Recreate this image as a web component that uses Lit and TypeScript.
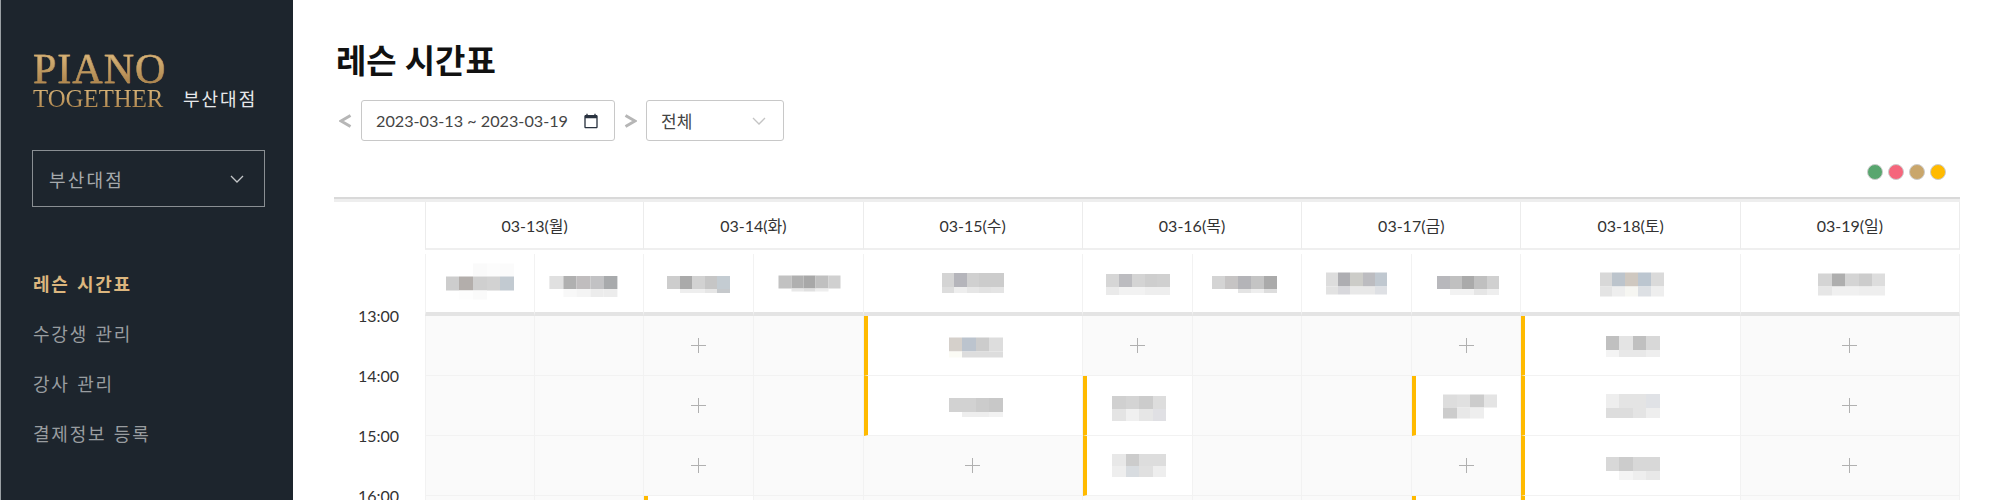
import { LitElement, html, css, svg } from "lit";
import { customElement } from "lit/decorators.js";

interface Mosaic { w: number; rows: string[][]; h: number[]; dx: number; dy: number; }
type Cell =
  | { kind: "empty"; span: number }
  | { kind: "plus"; span: number }
  | { kind: "booked"; span: number; m: Mosaic };

const T = "transparent";
const NAV = ["레슨 시간표", "수강생 관리", "강사 관리", "결제정보 등록"];
const DAYS = ["03-13(월)", "03-14(화)", "03-15(수)", "03-16(목)", "03-17(금)", "03-18(토)", "03-19(일)"];
const LEGEND = ["#58a66e", "#f5667c", "#c9a66b", "#ffba00"];

const NAMES: { span: number; m: Mosaic }[] = [
  { span: 1, m: { w: 13.6, dx: 0, dy: -1.5, h: [13, 14, 9], rows: [[T, T, "#fafafa", "#fcfcfc", "#fbfbfb"], ["#cdcdcd", "#b3aeab", "#cfcfcf", "#d2d2d2", "#c2cad1"], [T, "#fdfdfd", "#fafafa", T, T]] } },
  { span: 1, m: { w: 13.5, dx: -5.6, dy: 3, h: [13, 8], rows: [["#e0e0e0", "#b0b0b0", "#c0bdbe", "#c2c2c4", "#a8aaac"], [T, "#f8f8f8", "#f4f4f4", "#ececec", "#ececec"]] } },
  { span: 1, m: { w: 12.6, dx: 0, dy: 1, h: [13, 4], rows: [["#cdcdcd", "#aaaaaa", "#d2d2d2", "#c6c6c6", "#c4ccd2"], [T, "#eeeeee", "#eeeeee", "#e6e6e6", "#c6c9cc"]] } },
  { span: 1, m: { w: 12.4, dx: 1.5, dy: 0.5, h: [13, 3], rows: [["#c2c2c2", "#b0b0b0", "#a8a8a8", "#c0c0c0", "#d0d0d0"], [T, "#e8e8e8", "#e0e0e0", "#eeeeee", T]] } },
  { span: 2, m: { w: 12.4, dx: 0, dy: 0, h: [14, 6], rows: [["#d4d4d4", "#b5b5bb", "#d0d0d0", "#cccccc", "#cccccc"], ["#dddddd", "#eeeeee", "#e6e6e6", "#e2e2e2", "#e4e4e4"]] } },
  { span: 1, m: { w: 12.8, dx: 1, dy: 1, h: [13, 8], rows: [["#d6d6d6", "#bcbcc0", "#d4d4d4", "#cecece", "#d0d0d0"], ["#eaeaea", "#f2f2f2", "#f2f2f2", "#eeeeee", "#eeeeee"]] } },
  { span: 1, m: { w: 13, dx: -2, dy: 1, h: [13, 4], rows: [["#d4d4d4", "#c6c4c4", "#b4b4b8", "#c4c4c4", "#aaaaaa"], [T, T, "#e4e4e4", "#eeeeee", "#dddddd"]] } },
  { span: 1, m: { w: 12.2, dx: 0, dy: 0.5, h: [14, 8], rows: [["#dddddd", "#aeaeb2", "#ccccc8", "#bcbcc0", "#c0c8d0"], ["#e2e2e2", "#d8d8dc", "#e8e8e8", "#e8e8e8", "#dee0e4"]] } },
  { span: 1, m: { w: 12.4, dx: 2, dy: 2, h: [13, 6], rows: [["#b8b8bc", "#c0c0c0", "#aaaaaa", "#c0c0c0", "#d0d0d0"], [T, "#f2f2f2", "#f2f2f2", "#e6e6e6", "#eeeeee"]] } },
  { span: 2, m: { w: 12.8, dx: 1, dy: 1.5, h: [14, 10], rows: [["#d8d8d8", "#bcc4cc", "#cfc8c0", "#bcc6d0", "#dadada"], ["#e4e4e4", "#eeeeee", "#f6f6f2", "#dde0e4", "#eeeeee"]] } },
  { span: 2, m: { w: 13.4, dx: 2, dy: 1.5, h: [13, 9], rows: [["#d4d4d4", "#aeaeae", "#d4d4d4", "#cccccc", "#dddddd"], ["#e6e6e6", "#f0f0f0", "#f0f0f0", "#eeeeee", "#eeeeee"]] } },
];

const e = (span = 1): Cell => ({ kind: "empty", span });
const p = (span = 1): Cell => ({ kind: "plus", span });
const b = (span: number, dx: number, dy: number, h: number[], rows: string[][]): Cell =>
  ({ kind: "booked", span, m: { w: 13.5, dx, dy, h, rows } });

const ROWS: { time: string; cells: Cell[] }[] = [
  {
    time: "13:00",
    cells: [
      e(), e(), p(), e(),
      b(2, 1, 1.5, [14, 6], [["#d5d0cb", "#bcc4ce", "#cccccc", "#dddddd"], ["#fbfbf5", "#dddddd", "#dddddd", "#dddddd"]]),
      p(), e(), e(), p(),
      b(2, 0, 1, [14, 7], [["#c0c0c0", "#e4e4e4", "#c0c0c0", "#d8d8d8"], ["#f4f4f4", "#e8e8e8", "#e8e8e8", "#eeeeee"]]),
      p(2),
    ],
  },
  {
    time: "14:00",
    cells: [
      e(), e(), p(), e(),
      b(2, 1, 2, [14, 5], [["#d2d2d2", "#d2d2d2", "#cccccc", "#c8c8c8"], [T, "#eeeeee", "#eeeeee", "#f2f2f2"]]),
      b(1, 0, 3, [13, 12], [["#d0d0d0", "#d4d4d4", "#cccccc", "#dddddd"], ["#e4e4e4", "#f0f0f0", "#e6e6e6", "#e0e0e4"]]),
      e(), e(),
      b(1, 2, 0.5, [13, 11], [["#dddddd", "#e0e0e0", "#cccccc", "#e4e4e4"], ["#cccccc", "#e8e8e8", "#eeeeee", T]]),
      b(2, 0, 0, [14, 10], [["#eeeeee", "#e4e4e4", "#e4e4e4", "#e0e2e6"], ["#dddddd", "#dddddd", "#e4e4e4", "#eeeeee"]]),
      p(2),
    ],
  },
  {
    time: "15:00",
    cells: [
      e(), e(), p(), e(), p(2),
      b(1, 0, 0, [12, 11], [["#e8e8e8", "#cccccc", "#dddddd", "#dddddd"], ["#eeeeee", "#d8dce0", "#e0e0e0", "#eeeeee"]]),
      e(), e(), p(),
      b(2, 0, 3, [14, 9], [["#d8d8d8", "#cccccc", "#d8d8d8", "#d8d8d8"], [T, "#f4f4f4", "#eeeeee", "#e8e8e8"]]),
      p(2),
    ],
  },
  {
    time: "16:00",
    cells: [
      e(), e(),
      b(1, 0, 0, [], []),
      e(), e(2), e(), e(), e(),
      b(1, 0, 0, [], []),
      b(2, 0, 0, [], []),
      e(2),
    ],
  },
];

@customElement("app-root")
export class AppRoot extends LitElement {
  static styles = css`
    :host {
      display: block;
      height: 500px;
      overflow: hidden;
      font-family: Lato, "Noto Sans CJK KR", sans-serif;
      color: #333;
      background: #fff;
    }
    .page { display: flex; height: 500px; overflow: hidden; }

    .side {
      width: 293px;
      flex: none;
      box-sizing: border-box;
      background: #1d252d;
      border-left: 1px solid #9aa0a4;
      padding: 53px 0 0 32px;
    }
    .brand { display: flex; align-items: flex-end; }
    .logo { font-family: "Liberation Serif", serif; width: 137px; }
    .logo div {
      background: linear-gradient(180deg, #dcb87c, #a98049);
      -webkit-background-clip: text;
      background-clip: text;
      color: transparent;
      white-space: nowrap;
    }
    .piano {
      font-size: 42px;
      line-height: 32px;
      letter-spacing: 1px;
      margin-bottom: 2px;
      -webkit-text-stroke: 0.4px #c49c60;
    }
    .together { font-size: 24.8px; line-height: 24px; }
    .branch { font-size: 18px; color: #e6e8ea; line-height: 24px; margin-left: 13px; letter-spacing: 2px; }
    .branch-select {
      width: 233px;
      height: 57px;
      box-sizing: border-box;
      margin: 39px 0 0 -1px;
      border: 1px solid #8a8f93;
      display: flex;
      align-items: center;
      justify-content: space-between;
      padding: 0 20px 0 16px;
      color: #a5a9ac;
      font-size: 18px;
      letter-spacing: 2.2px;
    }
    .nav { list-style: none; margin: 52px 0 0; padding: 0; }
    .nav li {
      height: 50px;
      line-height: 50px;
      font-size: 18px;
      color: #999da0;
      letter-spacing: 1.8px;
      word-spacing: 1px;
    }
    .nav li.on { color: #dcb67e; font-weight: 700; }

    .main { flex: none; width: 1626px; margin-left: 41px; }
    h1 {
      margin: 36px 0 0;
      height: 48px;
      line-height: 48px;
      font-size: 33px;
      font-weight: 700;
      color: #111;
      padding-left: 2px;
    }
    .tools { display: flex; align-items: center; margin-top: 16px; height: 41px; }
    .arrow { display: flex; justify-content: center; }
    .arrow.prev { width: 27px; justify-content: flex-start; padding-left: 5px; box-sizing: border-box; }
    .arrow.next { width: 31px; }
    .input {
      height: 41px;
      box-sizing: border-box;
      border: 1px solid #c8c8c8;
      border-radius: 3px;
      display: flex;
      align-items: center;
      justify-content: space-between;
      font-size: 16.2px;
      color: #444;
    }
    .input.date { width: 254px; padding: 0 15px 0 14px; }
    .input.filter { width: 138px; padding: 0 17px 0 14px; font-size: 17px; }
    .legend { display: flex; justify-content: flex-end; gap: 5px; margin-top: 23px; height: 17px; padding-right: 14px; }
    .dot {
      width: 16px;
      height: 16px;
      box-sizing: border-box;
      border-radius: 50%;
      border: 1px solid #ccc;
    }

    .table {
      margin-top: 16px;
      border-top: 2px solid #d9d9d9;
      display: grid;
      grid-template-columns: 91px repeat(14, 1fr);
      grid-template-rows: 3px 48px 66px repeat(4, 60px);
    }
    .table > div { box-sizing: border-box; min-width: 0; }
    .rule-fill { background: #eeeeee; grid-column: 1 / -1; }
    .day {
      grid-column: span 2;
      display: flex;
      align-items: center;
      justify-content: center;
      font-size: 16px;
      color: #333;
      border-right: 1px solid #ececec;
      border-bottom: 2px solid #efefef;
      background: #fff;
    }
    .day.first { border-left: 1px solid #ececec; }
    .blank { background: #fff; }
    .name {
      display: flex;
      align-items: center;
      justify-content: center;
      margin-top: 4px;
      border-right: 1px solid #f2f2f2;
      border-bottom: 4px solid #e4e4e4;
    }
    .name.first { border-left: 1px solid #f2f2f2; }
    .time {
      font-size: 16px;
      text-align: right;
      padding-right: 26px;
      height: 20px;
      line-height: 20px;
      margin-top: -10px;
      color: #333;
    }
    .cell {
      display: flex;
      align-items: center;
      justify-content: center;
      border-right: 1px solid #f2f2f2;
      border-bottom: 1px solid #f2f2f2;
      background: #fafafa;
    }
    .cell.first { border-left: 1px solid #f2f2f2; }
    .cell.booked { background: #fff; border-left: 4px solid #ffba00; }
    .mosaic { display: grid; flex: none; }
    .mosaic i { display: block; }
  `;

  private chevron(color: string, w = 14, h = 8) {
    return svg`<svg width=${w} height=${h} viewBox="0 0 14 8"><polyline points="1,1 7,7 13,1" fill="none" stroke=${color} stroke-width="1.3"/></svg>`;
  }

  private mosaic(m: Mosaic) {
    if (!m.rows.length) return "";
    return html`<div
      class="mosaic"
      style="grid-template-columns:repeat(${m.rows[0].length},${m.w}px);grid-template-rows:${m.h.map((v) => v + "px").join(" ")};transform:translate(${m.dx}px,${m.dy}px)"
    >
      ${m.rows.flat().map((c) => html`<i style="background:${c}"></i>`)}
    </div>`;
  }

  private cell(c: Cell, first: boolean) {
    const span = `grid-column:span ${c.span}`;
    const cls = `cell ${first ? "first" : ""} ${c.kind === "booked" ? "booked" : ""}`;
    return html`<div class=${cls} style=${span}>
      ${c.kind === "plus"
        ? svg`<svg width="15" height="15" viewBox="0 0 15 15"><path d="M0 7.5H15M7.5 0V15" stroke="#b0b0b0" stroke-width="1" fill="none"/></svg>`
        : c.kind === "booked"
          ? this.mosaic(c.m)
          : ""}
    </div>`;
  }

  render() {
    return html`<div class="page">
      <aside class="side">
        <div class="brand">
          <div class="logo">
            <div class="piano">PIANO</div>
            <div class="together">TOGETHER</div>
          </div>
          <div class="branch">부산대점</div>
        </div>
        <div class="branch-select">
          <span>부산대점</span>
          ${this.chevron("#c4c7c9")}
        </div>
        <ul class="nav">
          ${NAV.map((n, i) => html`<li class=${i === 0 ? "on" : ""}>${n}</li>`)}
        </ul>
      </aside>
      <main class="main">
        <h1>레슨 시간표</h1>
        <div class="tools">
          <div class="arrow prev">
            <svg width="13" height="14" viewBox="0 0 13 14"><polyline points="11.5,1.5 2,7 11.5,12.5" fill="none" stroke="#b6b6b6" stroke-width="3"/></svg>
          </div>
          <div class="input date">
            <span>2023-03-13 ~ 2023-03-19</span>
            <svg width="16" height="16" viewBox="0 0 24 24"><path fill="#2a3340" d="M20 3h-1V1h-2v2H7V1H5v2H4c-1.1 0-2 .9-2 2v16c0 1.1.9 2 2 2h16c1.1 0 2-.9 2-2V5c0-1.1-.9-2-2-2zm0 18H4V8h16v13z"/></svg>
          </div>
          <div class="arrow next">
            <svg width="13" height="14" viewBox="0 0 13 14"><polyline points="1.5,1.5 11,7 1.5,12.5" fill="none" stroke="#b6b6b6" stroke-width="3"/></svg>
          </div>
          <div class="input filter">
            <span>전체</span>
            ${this.chevron("#c4c4c4", 14, 8)}
          </div>
        </div>
        <div class="legend">
          ${LEGEND.map((c) => html`<div class="dot" style="background:${c}"></div>`)}
        </div>
        <div class="table">
          <div class="rule-fill"></div>
          <div class="blank"></div>
          ${DAYS.map((d, i) => html`<div class="day ${i === 0 ? "first" : ""}">${d}</div>`)}
          <div class="blank"></div>
          ${NAMES.map(
            (n, i) => html`<div class="name ${i === 0 ? "first" : ""}" style="grid-column:span ${n.span}">${this.mosaic(n.m)}</div>`
          )}
          ${ROWS.map(
            (r) => html`<div class="time">${r.time}</div>
              ${r.cells.map((c, i) => this.cell(c, i === 0))}`
          )}
        </div>
      </main>
    </div>`;
  }
}
